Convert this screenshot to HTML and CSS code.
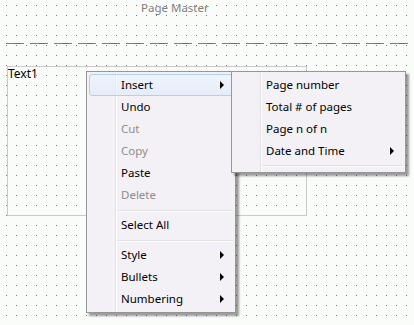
FILE: index.html
```html
<!DOCTYPE html>
<html>
<head>
<meta charset="utf-8">
<link rel="stylesheet" href="styles.css">
</head>
<body>
<div class="canvas">
  <div class="title">Page Master</div>
  <div class="guide"></div>
  <div class="textbox"><span class="tb-label">Text1</span></div>

  <div class="menu main">
    <div class="item hl"><span class="lbl">Insert</span><i class="arr"></i></div>
    <div class="item"><span class="lbl">Undo</span></div>
    <div class="item dis"><span class="lbl">Cut</span></div>
    <div class="item dis"><span class="lbl">Copy</span></div>
    <div class="item"><span class="lbl">Paste</span></div>
    <div class="item dis"><span class="lbl">Delete</span></div>
    <div class="sep"></div>
    <div class="item"><span class="lbl">Select All</span></div>
    <div class="sep"></div>
    <div class="item"><span class="lbl">Style</span><i class="arr"></i></div>
    <div class="item"><span class="lbl">Bullets</span><i class="arr"></i></div>
    <div class="item"><span class="lbl">Numbering</span><i class="arr"></i></div>
  </div>

  <div class="menu sub">
    <div class="item"><span class="lbl">Page number</span></div>
    <div class="item"><span class="lbl">Total # of pages</span></div>
    <div class="item"><span class="lbl">Page n of n</span></div>
    <div class="item"><span class="lbl">Date and Time</span><i class="arr"></i></div>
    <div class="sep sep-sub"></div>
  </div>
</div>
</body>
</html>
```

FILE: styles.css
```css
html, body {
  margin: 0;
  padding: 0;
}
body {
  width: 414px;
  height: 325px;
  overflow: hidden;
  font-family: "Noto Sans", "Open Sans", sans-serif;
  font-size: 11.5px;
}
.canvas {
  position: relative;
  width: 414px;
  height: 325px;
  background-color: #fafcf9;
  background-image:
    linear-gradient(to right, transparent 1px, #fafcf9 1px),
    linear-gradient(to bottom, #7a7a7a 1px, transparent 1px);
  background-size: 10px 10px, 10px 10px;
  background-position: 6px 5px, 6px 5px;
}
.title {
  position: absolute;
  left: 141px;
  top: 0;
  line-height: 16px;
  color: #7f7f7f;
}
.guide {
  position: absolute;
  left: 6px;
  top: 43px;
  width: 402px;
  height: 1px;
  background-image: repeating-linear-gradient(to right,
    #3b8ee2 0, #3b8ee2 9px,
    #6b6a66 9px, #6b6a66 15px,
    #3b8ee2 15px, #3b8ee2 18px,
    transparent 18px, transparent 24px);
}
.textbox {
  position: absolute;
  left: 7px;
  top: 66px;
  width: 300px;
  height: 150px;
  box-sizing: border-box;
  border: 1px solid #cacaca;
}
.tb-label {
  display: block;
  color: #000;
  font-size: 12px;
  line-height: 14px;
}
.menu {
  position: absolute;
  box-sizing: border-box;
  border: 1px solid #979797;
  padding: 2px;
  background-color: #f3f1f5;
  background-image: linear-gradient(to right,
    transparent 28px, #e2e1e4 28px, #e2e1e4 29px,
    #ffffff 29px, #ffffff 30px, transparent 30px);
  box-shadow: 3px 3px 2px rgba(0, 0, 0, 0.38);
  display: flex;
  flex-direction: column;
}
.main {
  left: 86px;
  top: 71px;
  width: 150px;
  height: 242px;
}
.sub {
  left: 231px;
  top: 71px;
  width: 175px;
  height: 102px;
}
.item {
  height: 22px;
  box-sizing: border-box;
  display: flex;
  align-items: center;
  padding-left: 31px;
  padding-right: 8px;
  color: #000;
  border: 1px solid transparent;
  border-radius: 3px;
}
.item .lbl {
  flex: 1;
  line-height: 16px;
}
.item.dis {
  color: #8d8d8d;
}
.item.hl {
  border-color: #afd0f5;
  background: linear-gradient(to bottom, rgba(238, 245, 253, 0.6), rgba(220, 234, 251, 0.6));
}
.arr {
  width: 0;
  height: 0;
  border-left: 4px solid #000;
  border-top: 4px solid transparent;
  border-bottom: 4px solid transparent;
}
.sep {
  height: 8px;
  box-sizing: border-box;
  margin-left: 28px;
  padding-top: 4px;
}
.sep::before {
  content: "";
  display: block;
  height: 1px;
  background: #e0dfe2;
  border-bottom: 1px solid #ffffff;
}
.sep-sub {
  padding-top: 3px;
}
```
